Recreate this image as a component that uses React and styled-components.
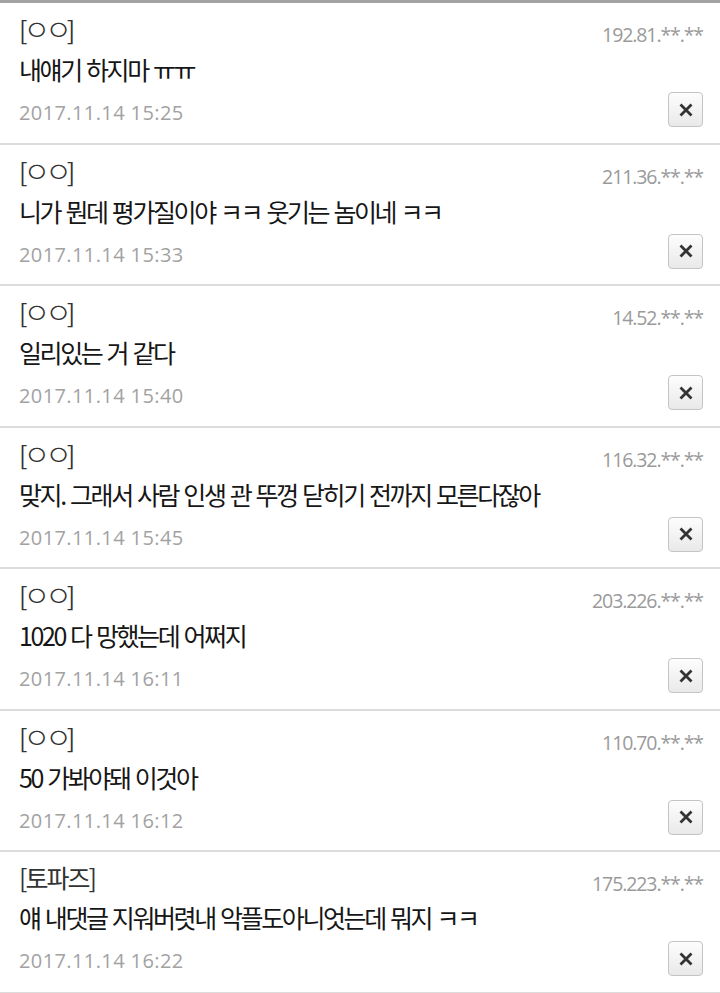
import React from "react";
import styled, { createGlobalStyle } from "styled-components";

const Global = createGlobalStyle`
  html, body { margin: 0; padding: 0; background: #fff; }
  body { font-family: "Noto Sans CJK KR", "Noto Sans", sans-serif; }
`;

const List = styled.div`
  border-top: 3px solid #a3a3a3;
`;

const Row = styled.div`
  box-sizing: border-box;
  height: 141.5px;
  border-bottom: 2px solid #dcdcdc;
  padding: 10px 17px 0 19px;
  display: grid;
  grid-template-columns: 1fr auto;
`;

const Left = styled.div`
  display: flex;
  flex-direction: column;
  min-width: 0;
`;

const Name = styled.div`
  font-size: 25px;
  line-height: 30px;
  letter-spacing: ${(p) => (p.$jamo ? "-4px" : "-2px")};
  color: #333;
  white-space: nowrap;
`;

const NameInner = styled.span`
  font-size: ${(p) => (p.$jamo ? "29px" : "25px")};
  font-weight: ${(p) => (p.$jamo ? 300 : 400)};
  letter-spacing: ${(p) => (p.$jamo ? "-5px" : "-2px")};
  vertical-align: ${(p) => (p.$jamo ? "-1px" : "baseline")};
`;

const Body = styled.div`
  margin-top: 10px;
  font-size: 25px;
  line-height: 30px;
  letter-spacing: -2.4px;
  word-spacing: 2px;
  color: #161616;
  white-space: nowrap;
`;

const Date = styled.div`
  margin-top: 15px;
  font-family: "Open Sans", "Noto Sans", sans-serif;
  font-size: 20px;
  line-height: 28px;
  letter-spacing: 0.4px;
  color: #a2a2a2;
`;

const Right = styled.div`
  display: flex;
  flex-direction: column;
  align-items: flex-end;
`;

const Ip = styled.div`
  margin-top: 10px;
  font-family: "Open Sans", "Noto Sans", sans-serif;
  font-size: 19.5px;
  line-height: 24px;
  letter-spacing: -1.1px;
  color: #9a9a9a;
  white-space: nowrap;
`;

const DelButton = styled.button`
  margin-top: 45px;
  box-sizing: border-box;
  width: 35px;
  height: 35px;
  padding: 0;
  border: 1px solid #c4c4c4;
  border-radius: 4px;
  background: linear-gradient(#fdfdfd, #e9e9e9);
  display: flex;
  align-items: center;
  justify-content: center;
`;

const XIcon = () => (
  <svg width="14" height="14" viewBox="0 0 14 14">
    <path d="M1.5 1.5 L12.5 12.5 M12.5 1.5 L1.5 12.5" stroke="#333" strokeWidth="2.8" strokeLinecap="butt" />
  </svg>
);

const comments = [
  { name: "ㅇㅇ", jamo: true, ip: "192.81.**.**", text: "내얘기 하지마 ㅠㅠ", date: "2017.11.14 15:25" },
  { name: "ㅇㅇ", jamo: true, ip: "211.36.**.**", text: "니가 뭔데 평가질이야 ㅋㅋ 웃기는 놈이네 ㅋㅋ", date: "2017.11.14 15:33" },
  { name: "ㅇㅇ", jamo: true, ip: "14.52.**.**", text: "일리있는 거 같다", date: "2017.11.14 15:40" },
  { name: "ㅇㅇ", jamo: true, ip: "116.32.**.**", text: "맞지. 그래서 사람 인생 관 뚜껑 닫히기 전까지 모른다잖아", date: "2017.11.14 15:45" },
  { name: "ㅇㅇ", jamo: true, ip: "203.226.**.**", text: "1020 다 망했는데 어쩌지", date: "2017.11.14 16:11" },
  { name: "ㅇㅇ", jamo: true, ip: "110.70.**.**", text: "50 가봐야돼 이것아", date: "2017.11.14 16:12" },
  { name: "토파즈", jamo: false, ip: "175.223.**.**", text: "얘 내댓글 지워버렷내 악플도아니엇는데 뭐지 ㅋㅋ", date: "2017.11.14 16:22" },
];

export default function App() {
  return (
    <>
      <Global />
      <List>
        {comments.map((c, i) => (
          <Row key={i}>
            <Left>
              <Name $jamo={c.jamo}>
                [<NameInner $jamo={c.jamo}>{c.name}</NameInner>]
              </Name>
              <Body>{c.text}</Body>
              <Date>{c.date}</Date>
            </Left>
            <Right>
              <Ip>{c.ip}</Ip>
              <DelButton aria-label="삭제">
                <XIcon />
              </DelButton>
            </Right>
          </Row>
        ))}
      </List>
    </>
  );
}
